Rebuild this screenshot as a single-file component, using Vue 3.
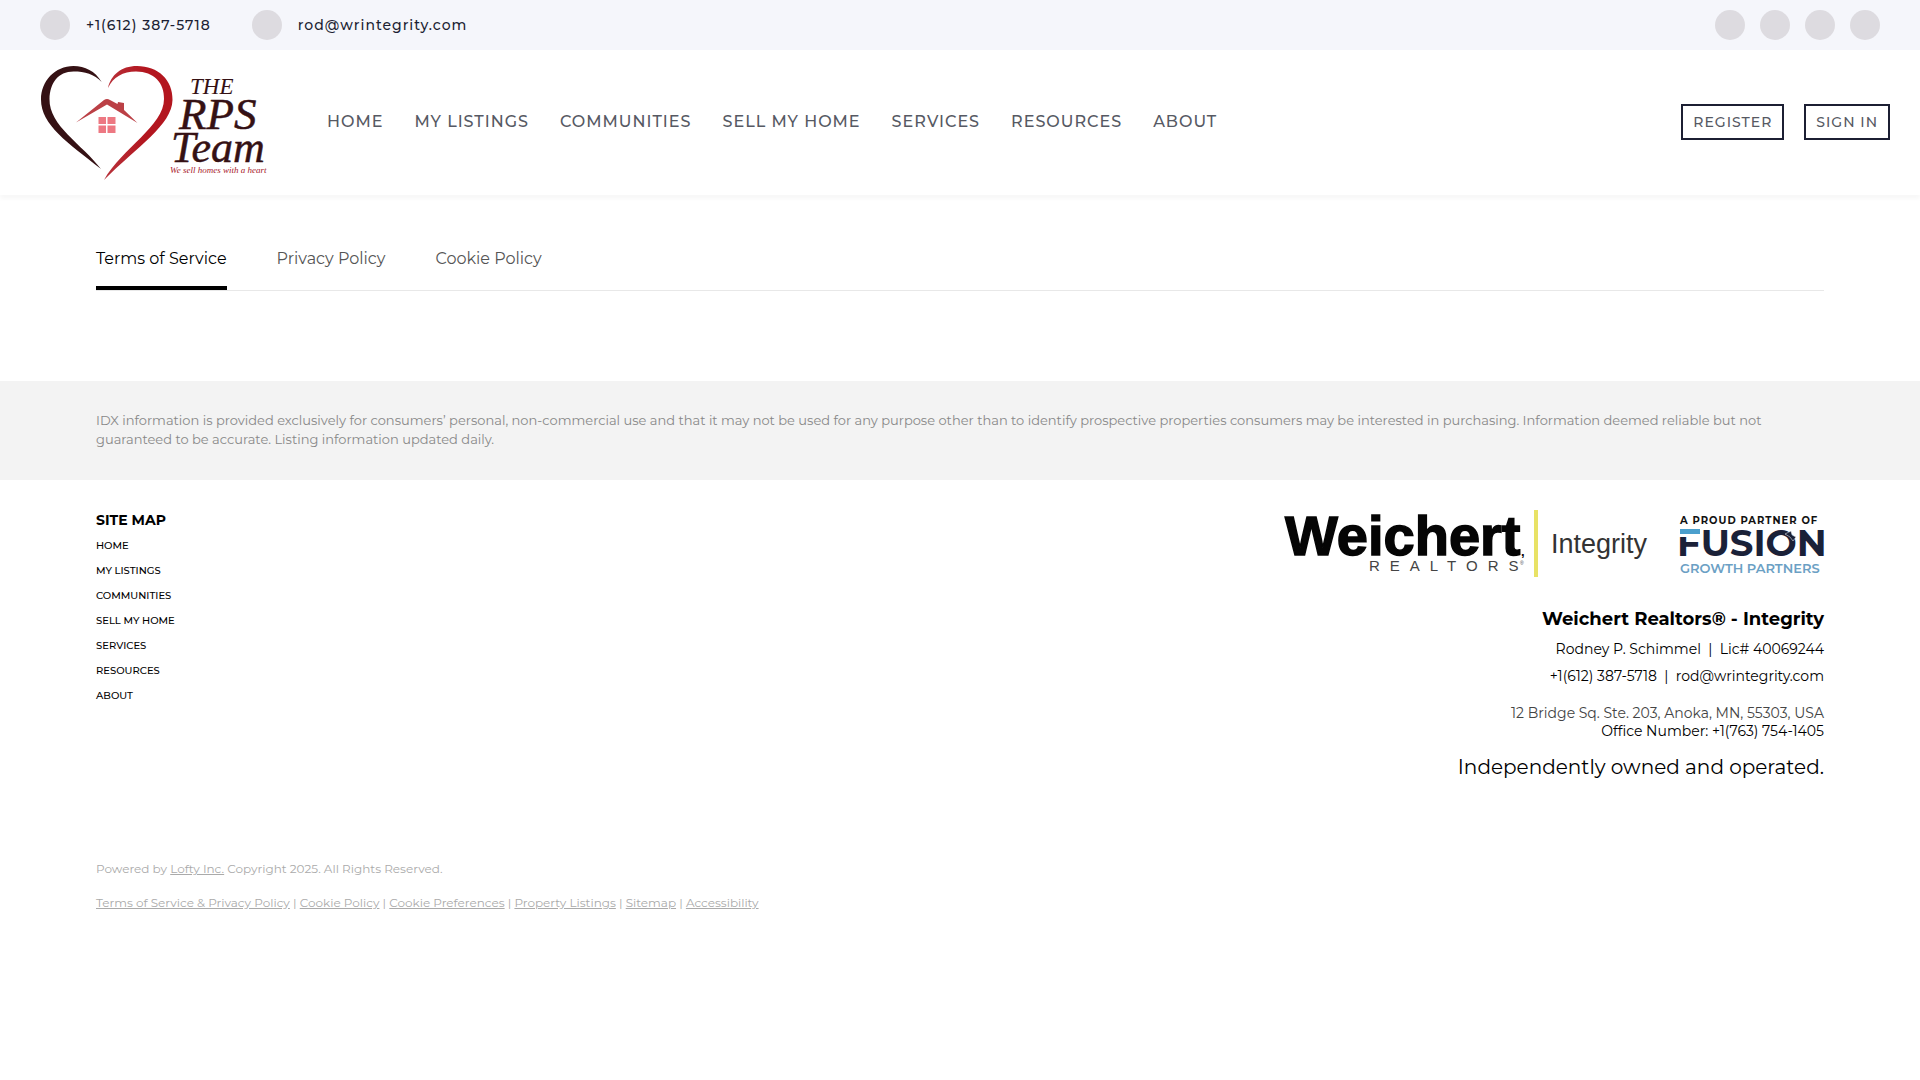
<script setup>
const menu = ['Home', 'My Listings', 'Communities', 'Sell My Home', 'Services', 'Resources', 'About']
const socials = ['Facebook', 'LinkedIn', 'Instagram', 'YouTube']
const tabs = ['Terms of Service', 'Privacy Policy', 'Cookie Policy']
const legal = [
  'Terms of Service & Privacy Policy',
  'Cookie Policy',
  'Cookie Preferences',
  'Property Listings',
  'Sitemap',
  'Accessibility',
]
</script>

<template>
  <div class="page">
    <div class="topbar">
      <div class="contacts">
        <a class="contact" href="#"><span class="dot"></span>+1(612) 387-5718</a>
        <a class="contact" href="#"><span class="dot"></span>rod@wrintegrity.com</a>
      </div>
      <div class="socials">
        <a v-for="s in socials" :key="s" class="dot" href="#" :aria-label="s"></a>
      </div>
    </div>

    <header class="header">
      <a class="logo" href="#" aria-label="The RPS Team">
        <svg width="228" height="118" viewBox="40 62 228 118">
          <defs>
            <linearGradient id="heartRed" x1="0" y1="0" x2="1" y2="0">
              <stop offset="0" stop-color="#b8333c" />
              <stop offset="0.6" stop-color="#b3161f" />
            </linearGradient>
          </defs>
          <path fill="#351114" d="M101.700 81C95 70 85 65 73.500 65C55 65 41 80 41 98.500C41 124 68 142 101 168C82 143 49 125 49.500 98C50 82 58 70.500 73.500 70.500C85 70.500 94 73 101.700 81Z" />
          <path fill="url(#heartRed)" d="M108 87C111 74 121 65 137 65C158 65 173 79 172.500 99C172 124 137 146 104 179C122 147 164 125 164 98C164.500 82 154 70.500 136 70.500C123 70.500 113 76 108 87Z" />
          <path fill="#bb4046" d="M76 121.500L104 99Q107 97 110 99L117.500 103L118 101L124 102V109L137.500 122L107 103.500Z" />
          <path fill="#ed7882" d="M98.500 116H106V123H98.500ZM107.500 116H115.500V123H107.500ZM98.500 124.500H106V132H98.500ZM107.500 124.500H115.500V132H107.500Z" />
          <g class="serif" fill="#351114">
            <text x="190" y="93" font-size="23">THE</text>
            <text x="179" y="128" font-size="45" stroke="#351114" stroke-width="0.500">RPS</text>
            <text x="171" y="161" font-size="44" stroke="#351114" stroke-width="0.500">Team</text>
            <text x="170" y="172" font-size="9" fill="#a8202b">We sell homes with a heart</text>
          </g>
        </svg>
      </a>
      <nav class="menu">
        <a v-for="m in menu" :key="m" href="#">{{ m }}</a>
      </nav>
      <div class="account">
        <button type="button">REGISTER</button>
        <button type="button">SIGN IN</button>
      </div>
    </header>

    <main class="policies">
      <nav class="tabs">
        <a v-for="(t, i) in tabs" :key="t" href="#" :class="{ active: i === 0 }">{{ t }}</a>
      </nav>
    </main>

    <section class="notice">
      <p>
        IDX information is provided exclusively for consumers’ personal, non-commercial use and that it may not be used
        for any purpose other than to identify prospective properties consumers may be interested in purchasing.
        Information deemed reliable but not guaranteed to be accurate. Listing information updated daily.
      </p>
    </section>

    <footer class="footer">
      <div class="columns">
        <nav class="sitemap">
          <h2>SITE MAP</h2>
          <a v-for="m in menu" :key="m" href="#">{{ m }}</a>
        </nav>
        <div class="office">
          <svg width="540" height="70" viewBox="1284 508 540 70" role="img" aria-label="Weichert Realtors Integrity, partner of Fusion Growth Partners">
            <g class="sans" fill="#050505">
              <text x="1285" y="555" font-size="56" font-weight="700" stroke="#050505" stroke-width="1.500">Weichert</text>
              <text x="1521" y="556" font-size="13" font-weight="700">,</text>
              <text x="1369" y="571" font-size="15" letter-spacing="10" fill="#444">REALTORS</text>
              <text x="1520" y="565" font-size="5" fill="#444">®</text>
              <rect x="1534" y="510" width="4" height="67" fill="#e8e266" />
              <text x="1551" y="553" font-size="27" fill="#333">Integrity</text>
            </g>
            <g class="geo">
              <text x="1680" y="524" font-size="10" font-weight="700" letter-spacing="1" fill="#111">A PROUD PARTNER OF</text>
              <text x="1677" y="556" font-size="37" font-weight="700" fill="#1a2138">FUSION</text>
              <rect x="1678" y="528" width="24" height="9" fill="#fff" />
              <rect x="1680" y="529" width="20" height="5" fill="#4b9fcd" />
              <path d="M1785 534L1791 531L1792 535L1796 537L1793 541L1790 537Z" fill="#1a2138" stroke="#fff" stroke-width="0.500" />
              <text x="1680" y="573" font-size="13" font-weight="600" fill="#6ba0c4">GROWTH PARTNERS</text>
            </g>
          </svg>
          <h3>Weichert Realtors® - Integrity</h3>
          <p class="line">Rodney P. Schimmel &nbsp;|&nbsp; Lic# 40069244</p>
          <p class="line"><a href="#">+1(612) 387-5718</a> &nbsp;|&nbsp; <a href="#">rod@wrintegrity.com</a></p>
          <p class="address">12 Bridge Sq. Ste. 203, Anoka, MN, 55303, USA</p>
          <p class="phone">Office Number: +1(763) 754-1405</p>
          <p class="owned">Independently owned and operated.</p>
        </div>
      </div>
      <div class="legal">
        <p>Powered by <a href="#">Lofty Inc.</a> Copyright 2025. All Rights Reserved.</p>
        <p>
          <template v-for="(l, i) in legal" :key="l"><template v-if="i"> | </template><a href="#">{{ l }}</a></template>
        </p>
      </div>
    </footer>
  </div>
</template>

<style>
body {
  margin: 0;
  background: #fff;
}
</style>

<style scoped>
.page {
  font-family: Montserrat, Inter, 'Liberation Sans', sans-serif;
  color: #000;
}
a {
  color: inherit;
  text-decoration: none;
}
p,
h2,
h3 {
  margin: 0;
}
svg {
  display: block;
  overflow: visible;
}
.serif {
  font-family: 'Liberation Serif', serif;
  font-style: italic;
}
.sans {
  font-family: 'Liberation Sans', sans-serif;
}
.geo {
  font-family: Montserrat, Inter, sans-serif;
}
.topbar {
  display: flex;
  justify-content: space-between;
  align-items: center;
  height: 50px;
  padding: 0 40px;
  background: #f5f6fb;
}
.contacts {
  display: flex;
  gap: 41px;
}
.contact {
  display: flex;
  align-items: center;
  gap: 16px;
  font-size: 14px;
  font-weight: 500;
  letter-spacing: 1px;
  color: #1c1f33;
}
.dot {
  width: 30px;
  height: 30px;
  border-radius: 50%;
  background: #dddbe0;
}
.socials {
  display: flex;
  gap: 15px;
}
.header {
  box-sizing: border-box;
  display: flex;
  align-items: center;
  height: 145px;
  padding: 0 30px 2px 40px;
  box-shadow: 0 4px 4px rgba(0, 0, 0, 0.03);
}
.menu {
  display: flex;
  flex: 1;
  gap: 31px;
  margin-left: 59px;
  font-size: 16px;
  font-weight: 500;
  letter-spacing: 1px;
  text-transform: uppercase;
  color: #565963;
}
.account {
  display: flex;
  gap: 20px;
}
.account button {
  height: 36px;
  padding: 0 10px;
  border: 2px solid #1c1f33;
  background: #fff;
  font-family: inherit;
  font-size: 14px;
  font-weight: 500;
  letter-spacing: 1px;
  color: #565963;
}
.policies {
  padding: 40px 96px 90px;
}
.tabs {
  display: flex;
  gap: 50px;
  border-bottom: 1px solid #e8e8e8;
  font-size: 16px;
  line-height: 48px;
  color: #555;
}
.tabs a {
  padding-bottom: 3px;
  border-bottom: 4px solid transparent;
}
.tabs .active {
  border-bottom-color: #000;
  color: #000;
}
.notice {
  padding: 30px 96px 31px;
  background: #f3f3f3;
  font-size: 13px;
  line-height: 19px;
  color: #888;
}
.footer {
  padding: 28px 96px;
}
.columns {
  display: flex;
  justify-content: space-between;
}
.sitemap {
  display: flex;
  flex-direction: column;
  font-size: 10px;
  font-weight: 500;
  line-height: 25px;
  text-transform: uppercase;
}
.sitemap h2 {
  margin-bottom: 1px;
  font-size: 14px;
  line-height: 24px;
}
.office {
  display: flex;
  flex-direction: column;
  align-items: flex-end;
  text-align: right;
}
.office h3 {
  margin: 28px 0 2px;
  font-size: 18px;
  line-height: 26px;
}
.line {
  margin-top: 3px;
  font-size: 14px;
  line-height: 24px;
}
.address {
  margin-top: 16px;
  font-size: 14px;
  line-height: 18px;
  color: #444;
}
.phone {
  font-size: 14px;
  line-height: 18px;
}
.owned {
  margin-top: 14px;
  font-size: 20px;
  line-height: 26px;
}
.legal {
  margin-top: 72px;
  font-size: 12px;
  line-height: 34px;
  color: #aaa;
}
.legal a {
  text-decoration: underline;
}
</style>
